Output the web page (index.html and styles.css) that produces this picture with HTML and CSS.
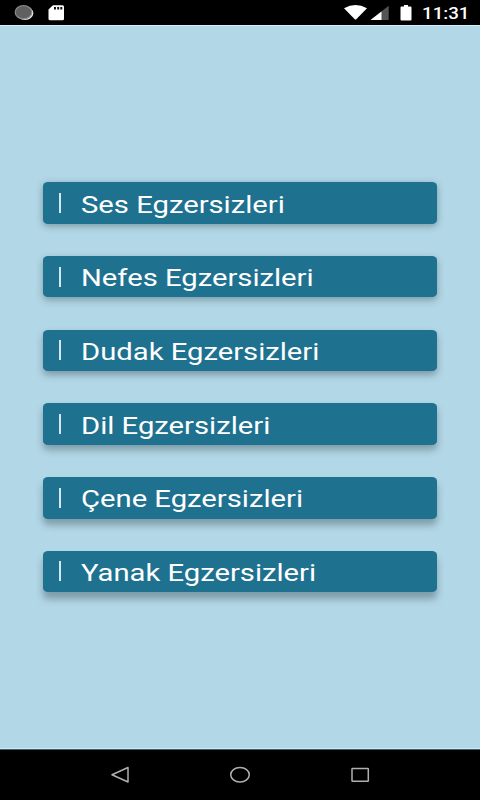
FILE: index.html
```html
<!DOCTYPE html>
<html lang="tr">
<head>
<meta charset="utf-8">
<title>Egzersizler</title>
<link rel="stylesheet" href="styles.css">
</head>
<body>
<div class="screen">
  <header class="status">
    <svg class="status-left" width="70" height="25" viewBox="0 0 70 25">
      <ellipse cx="25" cy="13.300" rx="8.300" ry="6.700" fill="#eee"/>
      <ellipse cx="23.500" cy="12.200" rx="8.300" ry="6.700" fill="#606060" stroke="#8c8c8c" stroke-width="1.200"/>
      <path d="M53 5.200H62.500Q64 5.200 64 6.700V18.700Q64 20.200 62.500 20.200H50Q48.500 20.200 48.500 18.700V9.500Z" fill="#fff"/>
      <path d="M55 7V9.500M58.200 7V9.500M61.300 7V9.500" stroke="#111" stroke-width="2"/>
    </svg>
    <div class="status-right">
      <svg width="72" height="25" viewBox="342 0 72 25">
        <path d="M344 8.300Q355.500 1.700 367 8.300L356.500 19Q355.500 20 354.500 19Z" fill="#fff"/>
        <path d="M370.500 20L388.700 5.800V20Z" fill="#555"/>
        <path d="M370.500 20L381.500 11.400V20Z" fill="#fff"/>
        <path d="M404 5H408V6.500H410.500Q411.500 6.500 411.500 7.500V19.500Q411.500 20.500 410.500 20.500H401.500Q400.500 20.500 400.500 19.500V7.500Q400.500 6.500 401.500 6.500H404Z" fill="#fff"/>
      </svg>
      <span class="clock">11:31</span>
    </div>
  </header>
  <main class="menu">
    <div class="item s1"><i class="bar"></i><span class="label">Ses Egzersizleri</span></div>
    <div class="item s2"><i class="bar"></i><span class="label">Nefes Egzersizleri</span></div>
    <div class="item s3"><i class="bar"></i><span class="label">Dudak Egzersizleri</span></div>
    <div class="item s4"><i class="bar"></i><span class="label">Dil Egzersizleri</span></div>
    <div class="item s5"><i class="bar"></i><span class="label">Çene Egzersizleri</span></div>
    <div class="item s6"><i class="bar"></i><span class="label">Yanak Egzersizleri</span></div>
  </main>
  <footer class="nav">
    <svg width="480" height="50" viewBox="0 750 480 50" fill="none" stroke="#b0b0b0" stroke-width="1.500">
      <path d="M112 774.700L128 767.500V782Z" stroke-linejoin="round"/>
      <ellipse cx="240" cy="774.700" rx="9.300" ry="7.300"/>
      <rect x="352" y="768.500" width="16.300" height="12.700" rx=".5"/>
    </svg>
  </footer>
</div>
</body>
</html>
```
FILE: styles.css
```css
body {
  margin: 0;
  background: #000;
  font-family: Roboto, "Liberation Sans", sans-serif;
}
.screen {
  width: 480px;
  height: 800px;
  display: flex;
  flex-direction: column;
  overflow: hidden;
}
.status {
  height: 25px;
  display: flex;
  justify-content: space-between;
  background: #000;
}
.status-right {
  display: flex;
  width: 138px;
}
.clock {
  margin-left: 8px;
  color: #fff;
  font-size: 16px;
  font-weight: 500;
  line-height: 27px;
  transform: scaleX(1.170);
  transform-origin: left;
}
.menu {
  flex: 1;
  box-sizing: border-box;
  padding: 156.300px 43px 0;
  background: #b2d7e6;
  border-top: 1px solid #d0f0f8;
  border-bottom: 1px solid #c4edf5;
  display: flex;
  flex-direction: column;
  gap: 32.200px;
}
.item {
  height: 41.500px;
  border-radius: 5px / 4px;
  background: #1f7190;
  display: flex;
  align-items: center;
}
.s1 { box-shadow: 0 2px 7px rgba(50, 70, 80, .45); }
.s2 { box-shadow: 0 3px 7px rgba(50, 70, 80, .42); }
.s3 { box-shadow: 0 4px 7px rgba(50, 70, 80, .42); }
.s4 { box-shadow: 0 5px 7px rgba(50, 70, 80, .4); }
.s5 { box-shadow: 0 6px 7px rgba(50, 70, 80, .4); }
.s6 { box-shadow: 0 7px 7px rgba(50, 70, 80, .4); }
.bar {
  width: 2px;
  height: 20px;
  margin: 0 19.800px 0 16px;
  background: #d5e7ee;
}
.label {
  color: #fff;
  font-size: 23.500px;
  line-height: 41px;
  padding-top: 4px;
  white-space: nowrap;
  transform: scaleX(1.243);
  transform-origin: left;
}
.nav {
  height: 50px;
  border-top: 1px solid #3f5e66;
  background: #000;
}
.nav svg {
  display: block;
}
```
